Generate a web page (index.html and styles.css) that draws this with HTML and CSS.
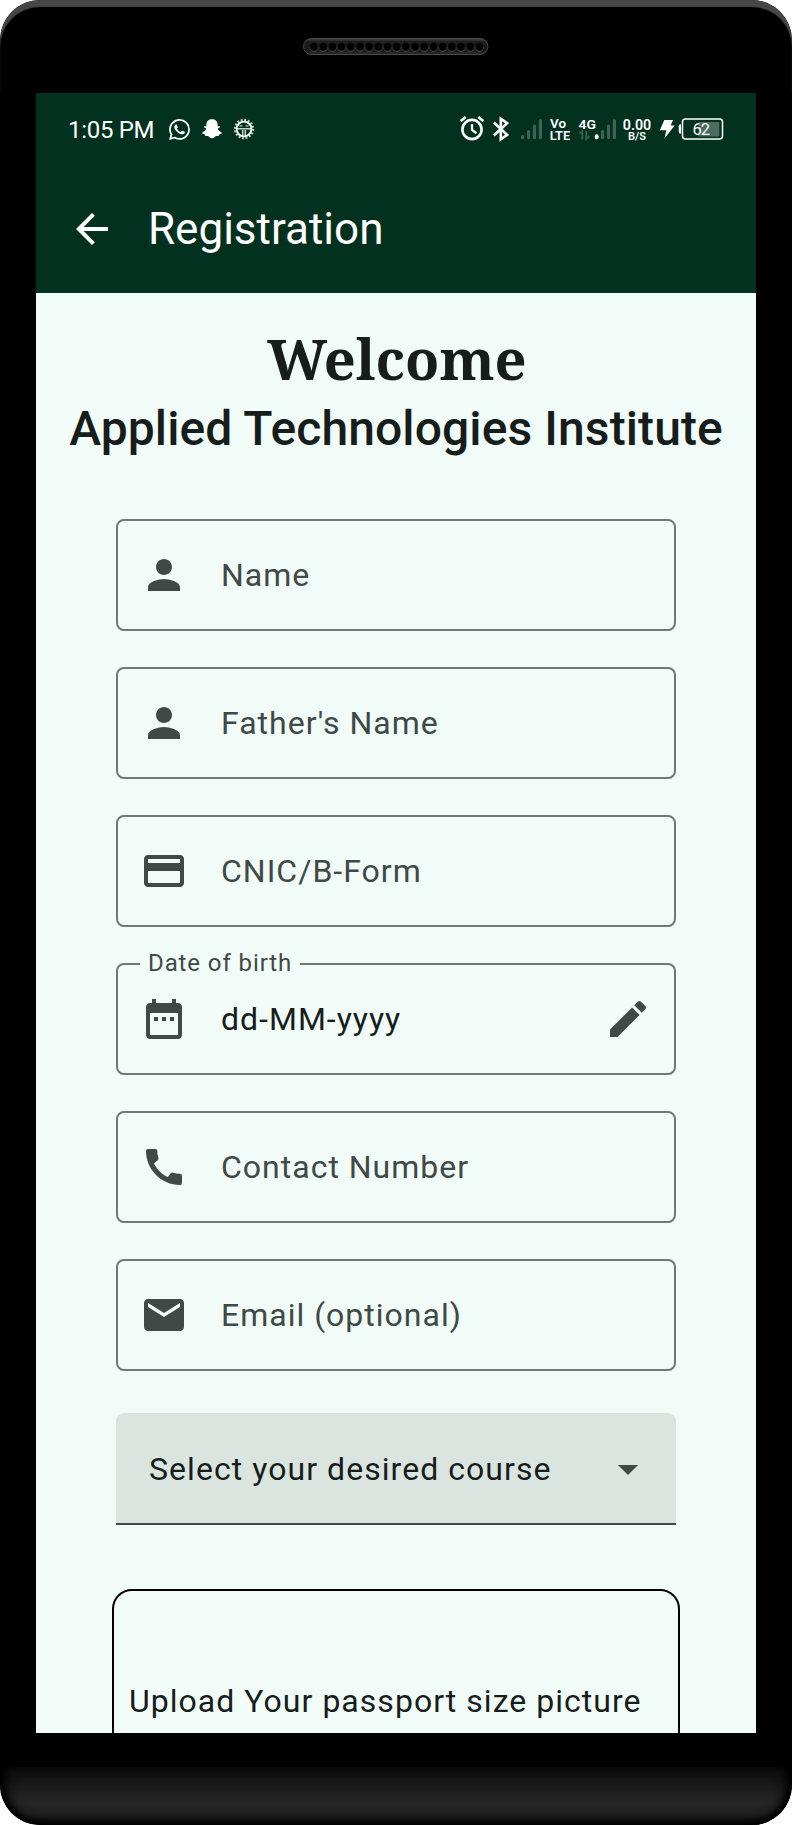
FILE: index.html
```html
<!DOCTYPE html>
<html lang="en">
<head>
<meta charset="utf-8">
<title>Registration</title>
<link rel="stylesheet" href="styles.css">
</head>
<body>
<div class="phone">
  <div class="phone-top">
    <svg class="speaker" width="186" height="18" viewBox="0 0 186 18">
      <defs>
        <linearGradient id="rim" x1="0" y1="0" x2="0" y2="1"><stop offset="0" stop-color="#484848"/><stop offset=".2" stop-color="#1e1e1e"/><stop offset=".75" stop-color="#161616"/><stop offset="1" stop-color="#303030"/></linearGradient>
        <pattern id="holes" x="6.4" y="4" width="9.19" height="11" patternUnits="userSpaceOnUse"><circle cx="4.6" cy="5.800" r="4.200" fill="#484848"/><circle cx="4.6" cy="4.800" r="4" fill="#000"/></pattern>
      </defs>
      <rect x=".5" y=".5" width="184.5" height="16" rx="8" fill="url(#rim)" stroke="#484848"/>
      <rect x="6.4" y="4" width="174.6" height="11" fill="url(#holes)"/>
    </svg>
  </div>
  <main class="screen">
    <div class="status">
      <span class="time">1:05 PM</span>
      <svg class="ic-wa" width="21" height="21" viewBox="0 0 24 24" fill="#fff"><path d="M17.47 14.38c-.3-.15-1.76-.87-2.03-.97-.27-.1-.47-.15-.67.15-.2.3-.77.97-.94 1.16-.17.2-.35.22-.64.08-.3-.15-1.26-.46-2.39-1.48-.88-.79-1.48-1.76-1.65-2.06-.17-.3-.02-.46.13-.6.13-.14.3-.35.45-.53.15-.17.2-.3.3-.5.1-.2.05-.37-.03-.52-.07-.15-.67-1.61-.91-2.21-.24-.58-.49-.5-.67-.51h-.57c-.2 0-.52.07-.79.37-.27.3-1.04 1.02-1.04 2.48s1.06 2.88 1.21 3.07c.15.2 2.1 3.2 5.08 4.49.71.3 1.26.49 1.69.63.71.22 1.36.19 1.87.12.57-.09 1.76-.72 2-1.41.25-.7.25-1.29.18-1.42-.08-.12-.27-.2-.57-.34M12.05 21.79a9.87 9.87 0 0 1-5.03-1.38l-.36-.21-3.74.98 1-3.65-.24-.37a9.86 9.86 0 1 1 8.37 4.63M20.46 3.49A11.82 11.82 0 0 0 12.05 0C5.5 0 .16 5.34.16 11.89c0 2.1.55 4.14 1.59 5.95L.06 24l6.3-1.65a11.88 11.88 0 0 0 5.69 1.45c6.55 0 11.89-5.34 11.89-11.9a11.82 11.82 0 0 0-3.48-8.41z"/></svg>
      <svg class="ic-snap" width="20" height="20" viewBox="0 0 20 20" fill="#fff"><path d="M10 .3c3.200 0 5.600 2 5.600 5.400v1.700l2-.2c.8.2.7 1-.1 1.400l-1.700 1c.5 1.800 1.900 3 3.700 3.800.6.400.4 1.100-.3 1.400l-2 .7-.6 1.400h-2.100c-1.200 0-2.200 2.300-4.500 2.300s-3.300-2.300-4.500-2.300H3.400L2.800 15.500l-2-.7c-.7-.3-.9-1-.3-1.400 1.800-.8 3.200-2 3.700-3.800l-1.700-1c-.8-.4-.9-1.200-.1-1.400l2 .2V5.700C4.400 2.300 6.800.3 10 .3z"/></svg>
      <svg class="ic-gear" width="22" height="22" viewBox="0 0 22 22" fill="none" stroke="#fff"><circle cx="11" cy="11" r="9" stroke-width="2.400" stroke-dasharray="1.900 1.634" opacity=".75"/><circle cx="11" cy="11" r="7.400" stroke-width="1.900" opacity=".95"/><path d="M4 10.800h14M9.700 12v6M12.300 12v6" stroke-width="1.500" opacity=".8"/><path d="M6.500 8h3M12.500 8h3" stroke-width="1.400" opacity=".6"/></svg>
      <span class="spacer"></span>
      <svg class="sys" width="266" height="26" viewBox="458 116 266 26" fill="none" stroke="#fff">
        <g stroke-width="2.600"><circle cx="472" cy="129.500" r="9.600"/><path d="M472 124v6l4.500 3.300" stroke-width="2.300"/><path d="M460.700 121l5-4M483.300 121l-5-4"/></g>
        <path d="M493.800 122.500l13.300 12.300-6.300 4.400v-20.400l6.300 4.400-13.300 12.300" stroke-width="2.600"/>
        <g stroke="#3f6252" stroke-width="3.200" stroke-linecap="round"><path d="M522.600 137.600v-1M528.500 137.600v-6M534.500 137.600v-11.500M540.400 137.600v-17M602.600 137.600v-6M608.500 137.600v-11.500M614.400 137.600v-17"/></g>
        <path d="M596.700 137.400v-1.200" stroke-width="3.800" stroke-linecap="round"/>
        <g stroke="#3a5c4d" stroke-width="1.900"><path d="M579.300 133.500l3-2v8M586.300 131v8l3-3"/></g>
        <g fill="#fff" stroke="none" font-family="Roboto, sans-serif">
          <text x="550" y="127.500" font-size="12.500" font-weight="600" textLength="16" lengthAdjust="spacingAndGlyphs">Vo</text>
          <text x="549.700" y="139.700" font-size="12.500" font-weight="600" textLength="20.500" lengthAdjust="spacingAndGlyphs">LTE</text>
          <text x="578.500" y="128.700" font-size="13.500" font-weight="600" textLength="17.500" lengthAdjust="spacingAndGlyphs">4G</text>
          <text x="622.800" y="129.800" font-size="15" font-weight="600" textLength="28.400" lengthAdjust="spacingAndGlyphs">0.00</text>
          <text x="628" y="139.900" font-size="11" font-weight="600" textLength="18" lengthAdjust="spacingAndGlyphs">B/S</text>
        </g>
        <path d="M664.300 120h8.700l-2.300 5.500h4l-10.200 13 1.800-8.300h-6.500z" fill="#fff" stroke="none"/>
        <path d="M681 124.300h-.3a2 2 0 0 0-2 2v5.400a2 2 0 0 0 2 2h.3z" fill="#fff" stroke="none"/>
        <rect x="682.500" y="119" width="40" height="20" rx="3" stroke-width="1.500"/>
        <rect x="698.500" y="122" width="20.800" height="14.500" fill="#4c6d5f" stroke="none"/>
        <text x="692.500" y="134.900" font-size="16.500" textLength="17.500" font-family="Roboto, sans-serif" fill="#fff" stroke="none">62</text>
      </svg>
    </div>
    <header class="appbar">
      <svg width="48" height="48" viewBox="0 0 24 24" fill="#fff"><path d="M20 11H7.830l5.590-5.590L12 4l-8 8 8 8 1.410-1.410L7.830 13H20v-2z"/></svg>
      <h1>Registration</h1>
    </header>
    <div class="titles">
      <h2>Welcome</h2>
      <h3>Applied Technologies Institute</h3>
    </div>
    <form class="form">
      <div class="field"><svg class="icon" viewBox="0 0 24 24"><path d="M12 12c2.210 0 4-1.790 4-4s-1.790-4-4-4-4 1.790-4 4 1.790 4 4 4zm0 2c-2.670 0-8 1.340-8 4v2h16v-2c0-2.660-5.330-4-8-4z"/></svg><span class="hint">Name</span></div>
      <div class="field"><svg class="icon" viewBox="0 0 24 24"><path d="M12 12c2.210 0 4-1.790 4-4s-1.790-4-4-4-4 1.790-4 4 1.790 4 4 4zm0 2c-2.670 0-8 1.340-8 4v2h16v-2c0-2.660-5.330-4-8-4z"/></svg><span class="hint">Father's Name</span></div>
      <div class="field"><svg class="icon" viewBox="0 0 24 24"><path d="M20 4H4c-1.110 0-1.990.89-1.990 2L2 18c0 1.110.89 2 2 2h16c1.110 0 2-.89 2-2V6c0-1.110-.89-2-2-2zm0 14H4v-6h16v6zm0-10H4V6h16v2z"/></svg><span class="hint">CNIC/B-Form</span></div>
      <div class="field"><span class="float-label">Date of birth</span><svg class="icon" viewBox="0 0 24 24"><path d="M9 11H7v2h2v-2zm4 0h-2v2h2v-2zm4 0h-2v2h2v-2zm2-7h-1V2h-2v2H8V2H6v2H5c-1.110 0-1.990.9-1.990 2L3 20c0 1.100.89 2 2 2h14c1.100 0 2-.9 2-2V6c0-1.100-.9-2-2-2zm0 16H5V9h14v11z"/></svg><span class="hint value">dd-MM-yyyy</span><svg class="icon" viewBox="0 0 24 24"><path d="M3 17.250V21h3.750L17.810 9.940l-3.750-3.750L3 17.250zM20.710 7.040c.39-.39.39-1.020 0-1.410l-2.340-2.340c-.39-.39-1.020-.39-1.410 0l-1.830 1.830 3.750 3.750 1.830-1.830z"/></svg></div>
      <div class="field"><svg class="icon" viewBox="0 0 24 24"><path d="M20.010 15.380c-1.230 0-2.420-.2-3.530-.56-.35-.12-.74-.03-1.010.24l-1.570 1.970c-2.830-1.350-5.480-3.900-6.890-6.830l1.950-1.660c.27-.28.35-.67.24-1.020-.37-1.110-.56-2.300-.56-3.530 0-.54-.45-.99-.99-.99H4.190C3.650 3 3 3.240 3 3.990 3 13.280 10.730 21 20.010 21c.71 0 .99-.63.99-1.180v-3.450c0-.54-.45-.99-.99-.99z"/></svg><span class="hint">Contact Number</span></div>
      <div class="field"><svg class="icon" viewBox="0 0 24 24"><path d="M20 4H4c-1.100 0-1.990.9-1.990 2L2 18c0 1.100.9 2 2 2h16c1.100 0 2-.9 2-2V6c0-1.100-.9-2-2-2zm0 4l-8 5-8-5V6l8 5 8-5v2z"/></svg><span class="hint">Email (optional)</span></div>
      <div class="select"><span>Select your desired course</span><svg class="icon" viewBox="0 0 24 24"><path d="M7 10l5 5 5-5z"/></svg></div>
    </form>
    <div class="upload">Upload Your passport size picture</div>
  </main>
  <div class="phone-bottom"></div>
</div>
</body>
</html>
```
FILE: styles.css
```css
* { box-sizing: border-box; }
body { margin: 0; background: #fff; font-family: Roboto, "Liberation Sans", sans-serif; color: #161d1b; }
h1, h2, h3 { margin: 0; font-weight: 400; }
svg { display: block; flex: none; }

.phone { width: 792px; height: 1825px; background: #000; border-radius: 40px; overflow: hidden; display: flex; flex-direction: column; align-items: center; }
.phone-top { width: 792px; height: 93px; flex: none; padding: 38px 0 0 303px; border-radius: 40px 40px 0 0; box-shadow: inset 0 7px 1px #474747; }
.screen { width: 720px; height: 1640px; flex: none; background: #f1fbf8; overflow: hidden; display: flex; flex-direction: column; }
.phone-bottom { width: 792px; height: 58px; margin-top: 34px; flex: none; border-radius: 0 0 40px 40px; background: linear-gradient(#0c0c0c, #262626 62%, #222 75%, #161616); box-shadow: inset 0 -4px 6px #000, inset 10px 0 12px -4px #000, inset -10px 0 12px -4px #000; }

.status { height: 72px; flex: none; background: #02311f; color: #fff; display: flex; align-items: center; padding: 0 32px; }
.time { font-size: 24px; line-height: 28px; width: 101px; padding-top: 2px; letter-spacing: -0.3px; white-space: nowrap; }
.ic-snap { margin-left: 12px; }
.ic-gear { margin-left: 11px; }
.spacer { flex: 1; }

.appbar { height: 128px; flex: none; background: #02311f; color: #fff; display: flex; align-items: center; padding-left: 32px; gap: 32px; }
.appbar h1 { font-size: 44px; line-height: 56px; }

.titles { padding-top: 25px; height: 226px; flex: none; text-align: center; white-space: nowrap; }
.titles h2 { padding-left: 2px; font: 700 56px/80px "Noto Serif", "DejaVu Serif Condensed", "DejaVu Serif", serif; }
.titles h3 { margin-top: 3px; font-size: 48px; line-height: 56px; font-weight: 500; letter-spacing: 0.1px; }

.form { width: 560px; margin-left: 80px; flex: none; display: flex; flex-direction: column; gap: 36px; }
.field { height: 112px; border: 2px solid #6f7976; border-radius: 8px; display: flex; align-items: center; padding: 0 22px; position: relative; }
.icon { width: 48px; height: 48px; fill: #3f4946; }
.hint { flex: 1; padding-left: 33px; font-size: 32px; line-height: 48px; letter-spacing: 1px; color: #3f4946; white-space: nowrap; }
.value { color: #161d1b; }
.float-label { position: absolute; left: 22px; top: -18px; padding: 0 8px; background: #f1fbf8; font-size: 24px; line-height: 32px; letter-spacing: 0.9px; color: #3f4946; white-space: nowrap; }
.select { height: 112px; margin-top: 6px; background: #dbe5e0; border-bottom: 2px solid #3f4946; border-radius: 8px 8px 0 0; display: flex; align-items: center; justify-content: space-between; padding: 2px 24px 0 33px; font-size: 32px; letter-spacing: 1.05px; white-space: nowrap; }

.upload { width: 568px; height: 224px; flex: none; margin: 64px 0 0 76px; border: 2px solid #000; border-radius: 20px; display: flex; align-items: center; padding-left: 15px; font-size: 32px; letter-spacing: 1.03px; white-space: nowrap; }
```
